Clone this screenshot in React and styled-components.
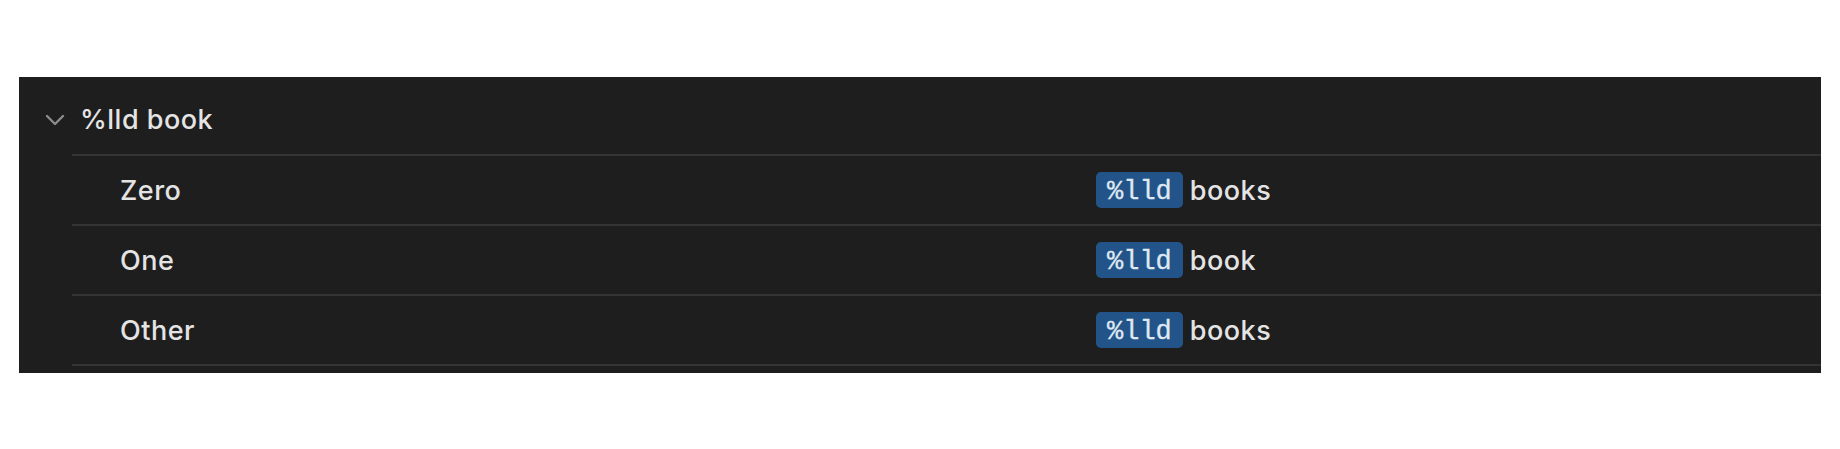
import React from 'react'
import styled, { createGlobalStyle } from 'styled-components'

const GlobalStyle = createGlobalStyle`
    body {
        margin: 0;
        background: #ffffff;
        font-family: Inter, "Liberation Sans", sans-serif;
    }
`

const Page = styled.div`
    padding: 77px 19px 0;
`

const Panel = styled.div`
    background: #1e1e1e;
    padding-bottom: 7px;
`

const GroupHeader = styled.div`
    height: 77px;
    box-sizing: border-box;
    padding: 8px 0 0 26px;
    display: flex;
    align-items: center;
    gap: 15px;
    color: #e4e4e4;
    font-size: 27px;
    font-weight: 500;
    letter-spacing: 0.5px;
`

const Chevron = styled.svg`
    width: 20px;
    height: 12px;
    flex: none;
`

const List = styled.div`
    margin-left: 53px;
    border-bottom: 2px solid #343434;
`

const Row = styled.div`
    height: 70px;
    box-sizing: border-box;
    border-top: 2px solid #343434;
    display: grid;
    grid-template-columns: 976px 1fr;
    align-items: center;
    padding-left: 48px;
    color: #e4e4e4;
    font-size: 27px;
    font-weight: 500;
    letter-spacing: 0.5px;
`

const Value = styled.div`
    display: flex;
    align-items: center;
    gap: 7px;
`

const Token = styled.span`
    display: inline-flex;
    align-items: center;
    box-sizing: border-box;
    height: 36px;
    padding: 3px 11px 0;
    border-radius: 5px;
    background: #235489;
    color: #dfe8f2;
    font-family: "Liberation Mono", monospace;
    font-size: 27px;
    font-weight: 400;
    letter-spacing: 0;
    -webkit-text-stroke: 0.3px #dfe8f2;
`

function Variation(props) {
    return (
        <Row>
            <span>{props.label}</span>
            <Value>
                <Token>%lld</Token>
                <span>{props.text}</span>
            </Value>
        </Row>
    )
}

function App() {
    return (
        <>
            <GlobalStyle />
            <Page>
                <Panel>
                    <GroupHeader>
                        <Chevron viewBox="0 0 20 12">
                            <path d="M2 2 L10 10 L18 2" fill="none" stroke="#8c8c8c" strokeWidth="2.4" strokeLinecap="round" strokeLinejoin="round" />
                        </Chevron>
                        <span>%lld book</span>
                    </GroupHeader>
                    <List>
                        <Variation label="Zero" text="books" />
                        <Variation label="One" text="book" />
                        <Variation label="Other" text="books" />
                    </List>
                </Panel>
            </Page>
        </>
    )
}

export default App
